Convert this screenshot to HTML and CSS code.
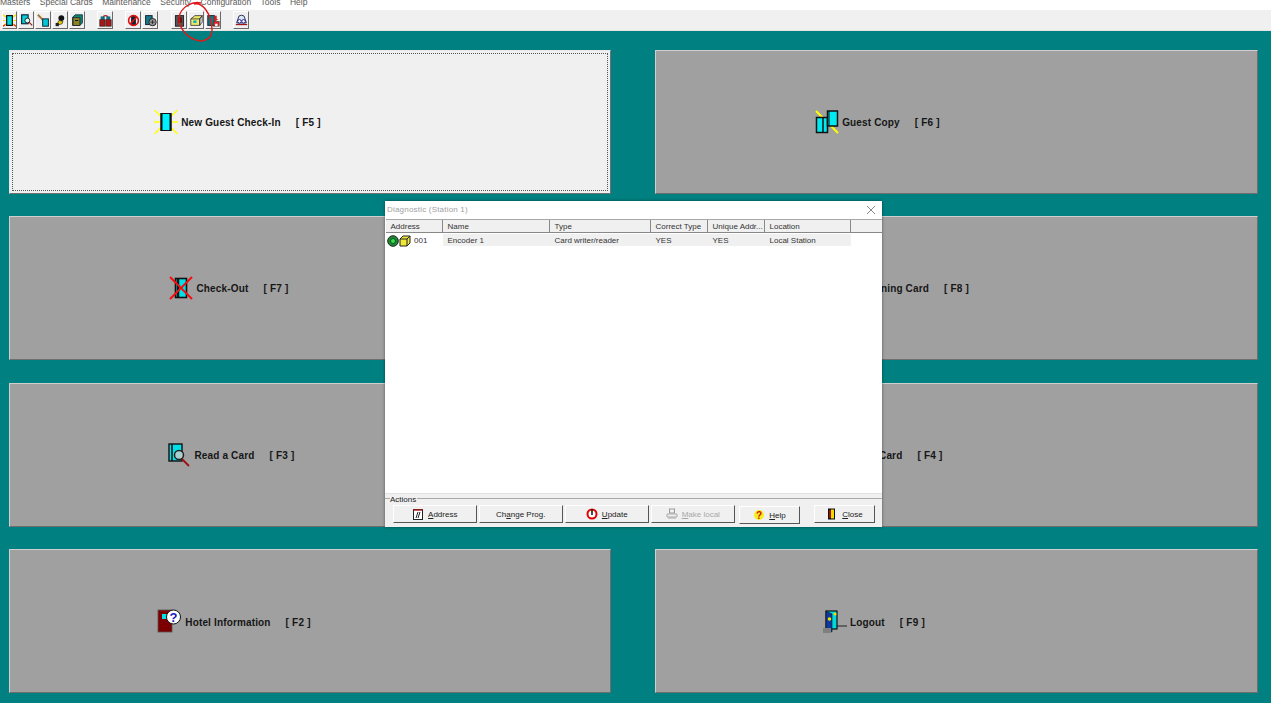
FILE: index.html
```html
<!DOCTYPE html>
<html lang="en">
<head>
<meta charset="utf-8">
<title>Card Encoding System</title>
<link rel="stylesheet" href="styles.css">
</head>
<body>
<header class="top">
  <nav class="menu">
    <span>Masters</span><span>Special Cards</span><span>Maintenance</span><span>Security</span><span>Configuration</span><span>Tools</span><span>Help</span>
  </nav>
  <div class="toolbar">
    <div class="tgroup g1">
      <button class="tb"><svg viewBox="0 0 16 16"><path d="M0 1l4 3M0 15l4-3M16 1l-4 3M16 15l-4-3M0 8h3M13 8h3" stroke="#f2e000" stroke-width="1.500"/><path d="M0 15l3-2M16 15l-3-2" stroke="#e02020" stroke-width="1.500"/><rect x="4.500" y="2" width="7" height="12" fill="#00d8e0" stroke="#111" stroke-width="1.500"/></svg></button>
      <button class="tb"><svg viewBox="0 0 16 16"><rect x="2" y="1" width="8" height="11" fill="#00d0d8" stroke="#123" stroke-width="1.400"/><circle cx="9" cy="8" r="3" fill="#dff" stroke="#222" stroke-width="1.200"/><path d="M11 10l4 4" stroke="#a01818" stroke-width="1.600"/></svg></button>
      <button class="tb"><svg viewBox="0 0 16 16"><path d="M1 1l7 7" stroke="#a87838" stroke-width="2.400"/><rect x="7" y="6" width="7" height="9" fill="#00c8d8" stroke="#123" stroke-width="1.200"/></svg></button>
      <button class="tb"><svg viewBox="0 0 16 16"><circle cx="9" cy="5" r="3.600" fill="#111"/><path d="M6 8l5 1-1 3-7 2z" fill="#e8d000" stroke="#222" stroke-width=".8"/><path d="M2 11h4v4H2z" fill="#222"/></svg></button>
      <button class="tb"><svg viewBox="0 0 16 16"><path d="M2 4l3-3h9v10l-3 3H2z" fill="#0d8a78" stroke="#123" stroke-width="1"/><rect x="2.500" y="4.500" width="8.500" height="9.500" fill="#8c8422" stroke="#222" stroke-width="1"/><path d="M5 8h4" stroke="#111" stroke-width="1.200"/></svg></button>
    </div>
    <div class="tgroup g2">
      <button class="tb"><svg viewBox="0 0 16 16"><path d="M5 5a3 3 0 0 1 6 0" fill="none" stroke="#c01818" stroke-width="1.500"/><rect x="2" y="3" width="5" height="4" fill="#107080"/><rect x="9" y="3" width="5" height="4" fill="#107080"/><rect x="1" y="7" width="6.500" height="8" fill="#a81818" stroke="#222" stroke-width=".8"/><rect x="8.500" y="7" width="6.500" height="8" fill="#a81818" stroke="#222" stroke-width=".8"/></svg></button>
    </div>
    <div class="tgroup g3">
      <button class="tb"><svg viewBox="0 0 16 16"><rect x="5" y="2" width="6" height="12" fill="#123"/><circle cx="8" cy="8" r="6" fill="none" stroke="#e01010" stroke-width="2"/><path d="M4 12L12 4" stroke="#e01010" stroke-width="2"/></svg></button>
      <button class="tb"><svg viewBox="0 0 16 16"><rect x="2" y="2" width="8" height="11" fill="#127a88" stroke="#123" stroke-width="1.200"/><circle cx="10.500" cy="10" r="4.500" fill="#999" stroke="#222" stroke-width="1.200"/><path d="M8 10h5M10.500 7.500v5" stroke="#222"/></svg></button>
    </div>
    <div class="tgroup g4">
      <button class="tb"><svg viewBox="0 0 16 16"><rect x="3" y="2" width="10" height="13" fill="#555" stroke="#222" stroke-width="1.200"/><rect x="6" y="4" width="5" height="7" fill="#6a1414"/></svg></button>
      <button class="tb"><svg viewBox="0 0 16 16"><path d="M1 6l5-4h9l-3 4v8H1z" fill="#f0e868" stroke="#333" stroke-width="1"/><path d="M1 6h11l3-4M12 6v8l3-4V2" fill="none" stroke="#333" stroke-width="1"/><rect x="4" y="8" width="4" height="3" fill="#0ab0b8"/></svg></button>
      <button class="tb"><svg viewBox="0 0 16 16"><rect x="1" y="2" width="8" height="12" fill="#117a80" stroke="#123" stroke-width="1.200"/><path d="M9 2h3v4h2l-3.500 3L7 6h2z" fill="#d82020"/><rect x="8" y="9" width="7" height="6" fill="#e02020" stroke="#444" stroke-width=".8"/><rect x="10" y="12" width="3" height="3" fill="#fff"/></svg></button>
    </div>
    <div class="tgroup g5">
      <button class="tb"><svg viewBox="0 0 16 16"><path d="M4 5a4 3.500 0 0 1 8 0l2 6H2z" fill="#d8e8f8" stroke="#224" stroke-width="1.100"/><circle cx="5.500" cy="9" r="2.200" fill="#fff" stroke="#118" stroke-width="1.100"/><circle cx="10.500" cy="9" r="2.200" fill="#fff" stroke="#118" stroke-width="1.100"/><path d="M1 13h14" stroke="#a01818" stroke-width="1.500"/></svg></button>
    </div>
  </div>
</header>

<main class="grid">
  <button class="big focus"><span class="focus-ring"><svg class="ic" viewBox="0 0 24 24"><path d="M0.500 0l6 6M23.500 0l-6 6M0.500 24l6-6M23.500 24l-6-6M0 12h6M18 12h6" stroke="#ffff00" stroke-width="1.400"/><rect x="7" y="3.500" width="10" height="17" fill="#00f0ff" stroke="#111" stroke-width="1"/><path d="M7.500 3v18M16.500 3v18" stroke="#111" stroke-width="2"/></svg><span class="lbl">New Guest Check-In</span><span class="key">[ F5 ]</span></span></button>
  <button class="big"><span class="inner"><svg class="ic" viewBox="0 0 24 24"><path d="M1 1l22 22" stroke="#ffff00" stroke-width="2"/><rect x="1.500" y="7.500" width="11" height="15" fill="#00e8f0" stroke="#111" stroke-width="1.500"/><path d="M8 7v16" stroke="#111" stroke-width="1.500"/><rect x="12.500" y="1" width="10" height="15" fill="#00e8f0" stroke="#111" stroke-width="1.500"/><path d="M14 1v15" stroke="#111" stroke-width="1"/></svg><span class="lbl">Guest Copy</span><span class="key">[ F6 ]</span></span></button>
  <button class="big"><span class="inner left-4"><svg class="ic" viewBox="0 0 24 24"><rect x="6.500" y="2.500" width="11" height="19" fill="#00e0e8" stroke="#111" stroke-width="1.600"/><path d="M9 2v20" stroke="#111" stroke-width="2.500"/><path d="M1 1l22 22M23 1L1 23" stroke="#f01010" stroke-width="2"/></svg><span class="lbl">Check-Out</span><span class="key">[ F7 ]</span></span></button>
  <button class="big"><span class="inner left-10"><span class="ic"></span><span class="lbl">Emergency Opening Card</span><span class="key">[ F8 ]</span></span></button>
  <button class="big row3"><span class="inner"><svg class="ic" viewBox="0 0 24 24"><rect x="2" y="1" width="13" height="17" fill="#00e0e8" stroke="#111" stroke-width="1.400"/><path d="M5 1v17" stroke="#111" stroke-width="1.600"/><circle cx="12" cy="12" r="4.500" fill="#a8d0d0" stroke="#222" stroke-width="1.500"/><path d="M15 16l7 7" stroke="#a01010" stroke-width="1.800"/></svg><span class="lbl">Read a Card</span><span class="key">[ F3 ]</span></span></button>
  <button class="big row3"><span class="inner"><span class="ic"></span><span class="lbl">Erase a Card</span><span class="key">[ F4 ]</span></span></button>
  <button class="big row4"><span class="inner right-6"><svg class="ic wide" viewBox="0 0 25 24"><rect x="1" y="1" width="14" height="22" fill="#7c0000" stroke="#555" stroke-width=".8"/><rect x="5" y="5" width="5" height="5" fill="#00e0e8"/><circle cx="16.500" cy="8" r="7" fill="#fff" stroke="#111"/><text class="q" x="16.500" y="12.500" text-anchor="middle">?</text></svg><span class="lbl">Hotel Information</span><span class="key">[ F2 ]</span></span></button>
  <button class="big row4"><span class="inner left-7"><svg class="ic" viewBox="0 0 24 24"><path d="M13 17h11" stroke="#222"/><rect x="3" y="2" width="11" height="18" fill="#00d8e0" stroke="#111" stroke-width="1.200"/><path d="M3 2l6 3v18l-6-3z" fill="#0a3a9c" stroke="#111" stroke-width=".6"/><circle cx="12" cy="5" r="1.500" fill="#f0e000"/><circle cx="6.500" cy="10" r="1.800" fill="#f0e000"/><path d="M0 19h8v5H0z" fill="#808080"/></svg><span class="lbl">Logout</span><span class="key">[ F9 ]</span></span></button>
</main>

<section class="dialog">
  <div class="titlebar"><span>Diagnostic (Station 1)</span><svg class="x" viewBox="0 0 10 10"><path d="M1 1l8 8M9 1l-8 8" stroke="#8a8a8a" stroke-width="1"/></svg></div>
  <div class="thead row-grid">
    <span>Address</span><span>Name</span><span>Type</span><span>Correct Type</span><span>Unique Addr...</span><span>Location</span><span></span>
  </div>
  <div class="list">
    <div class="row row-grid">
      <span class="addr"><svg class="si" viewBox="0 0 12 12"><circle cx="6" cy="6" r="5.300" fill="#1c8a30" stroke="#222"/><circle cx="6" cy="6" r="2.500" fill="#40e040" stroke="#053"/></svg><svg class="si" viewBox="0 0 12 12"><path d="M1 4l3-3h7v7l-3 3H1z" fill="#f0e838" stroke="#222"/><path d="M1 4h7v7M8 4l3-3" fill="none" stroke="#222"/></svg><em>001</em></span><span>Encoder 1</span><span>Card writer/reader</span><span>YES</span><span>YES</span><span>Local Station</span>
    </div>
  </div>
  <div class="actions">
    <span class="legend">Actions</span>
    <div class="btns">
      <button class="act w84"><svg class="bi" viewBox="0 0 12 12"><rect x="1.500" y="1.500" width="9" height="10" fill="#fff" stroke="#222"/><path d="M1.500 2h9" stroke="#b02020" stroke-width="1.500"/><path d="M4 10l2-6M6 10l2-6" stroke="#222"/></svg><span><u>A</u>ddress</span></button>
      <button class="act w84"><span>Ch<u>a</u>nge Prog.</span></button>
      <button class="act w84"><svg class="bi" viewBox="0 0 12 12"><circle cx="6" cy="6" r="4.500" fill="#fff" stroke="#e00000" stroke-width="2"/><path d="M6 1v6" stroke="#111" stroke-width="1.500"/></svg><span><u>U</u>pdate</span></button>
      <button class="act w84 off"><svg class="bi" viewBox="0 0 12 12"><rect x="3.500" y="1" width="5" height="4" fill="none" stroke="#999"/><path d="M1 6h10v3H1zM2 10h8" fill="none" stroke="#aaa"/></svg><span><u>M</u>ake local</span></button>
      <button class="act help"><svg class="bi" viewBox="0 0 12 12"><circle cx="6" cy="6" r="5" fill="#f6ee20"/><text class="qb" x="6" y="9.500" text-anchor="middle">?</text></svg><span><u>H</u>elp</span></button>
      <button class="act close"><svg class="bi" viewBox="0 0 12 12"><rect x="2" y="0.500" width="7" height="11" fill="#111"/><rect x="5" y="1.500" width="3" height="9" fill="#f0d800"/><rect x="3" y="2" width="2" height="8" fill="#a01010"/></svg><span><u>C</u>lose</span></button>
    </div>
  </div>
</section>

<svg class="annot" viewBox="0 0 36 41" aria-hidden="true"><path d="M24 2C15 0 4 6 2 16C1 26 10 38 23 40C30 40 35 36 35 29C35 23 33 14 29 9C26 5 22 2 17 3" fill="none" stroke="#e01818" stroke-width="1.400"/></svg>
</body>
</html>
```

FILE: styles.css
```css
* { box-sizing: border-box; }

html, body {
  margin: 0;
  height: 703px;
  overflow: hidden;
}

body {
  background: #008080;
  font-family: "Liberation Sans", Arial, sans-serif;
  display: flex;
  flex-direction: column;
}

button { font-family: inherit; padding: 0; }

.top { flex: none; height: 31px; background: #f0f0f0; }

.menu {
  height: 10px;
  background: #fff;
  display: flex;
  overflow: hidden;
  font-size: 8.5px;
  line-height: 7px;
  color: #5a5a5a;
  gap: 9.5px;
}

.menu span { display: block; margin-top: -1px; }

.toolbar {
  display: flex;
  height: 21px;
  align-items: center;
  padding-left: 2px;
  border-bottom: 1px solid #e4e4e4;
}

.tgroup { display: flex; gap: 1px; }
.g2 { margin-left: 12px; }
.g3 { margin-left: 12px; }
.g4 { margin-left: 13px; }
.g5 { margin-left: 12px; }

.tb {
  width: 16px;
  height: 18px;
  background: #f0f0f0;
  border: 1px solid;
  border-color: #fff #6a6a6a #6a6a6a #fff;
  display: flex;
  align-items: center;
  justify-content: center;
}

.g1 .tb:first-child { width: 15px; }
.tb svg { width: 13px; height: 13px; flex: none; }

.grid {
  flex: 1;
  display: grid;
  grid-template-columns: 602px 603px;
  grid-template-rows: repeat(4, 144px);
  column-gap: 44px;
  row-gap: 22.33px;
  padding: 19px 0 0 9px;
  align-content: start;
}

.big {
  background: #a0a0a0;
  border: 1px solid;
  border-color: #cfcfcf #6e6e6e #6e6e6e #cfcfcf;
  display: flex;
  align-items: stretch;
  color: #161616;
}

.focus { background: #f0f0f0; border-color: #e8e8e8 #707070 #707070 #e8e8e8; padding: 2px; }

.focus-ring, .inner {
  flex: 1;
  display: flex;
  align-items: center;
  justify-content: center;
  padding-right: 158px;
}

.focus-ring { border: 1px dotted #555; padding-right: 145px; }

.inner.left-4 { padding-right: 162px; }
.inner.left-7 { padding-right: 165px; }
.inner.left-10 { padding-right: 168px; }
.inner.right-6 { padding-right: 152px; }

.ic { width: 24px; height: 24px; flex: none; display: block; }
.ic.wide { width: 25px; }

.lbl {
  font-size: 10px;
  font-weight: 700;
  letter-spacing: 0.15px;
  margin-left: 3px;
  white-space: nowrap;
}

.key {
  font-size: 10px;
  font-weight: 700;
  letter-spacing: 0.2px;
  margin-left: 15px;
  white-space: nowrap;
}

.row3 .lbl, .row3 .key { padding-top: 2px; }
.row4 .lbl, .row4 .key { padding-top: 4px; }

.q { font: 700 13px "Liberation Sans", sans-serif; fill: #1818c0; }
.qb { font: 700 10px "Liberation Sans", sans-serif; fill: #d01010; }

.dialog {
  position: absolute;
  left: 385px;
  top: 201px;
  width: 497px;
  height: 326px;
  background: #fff;
  box-shadow: 0 0 3px rgba(0, 0, 0, 0.45);
  display: flex;
  flex-direction: column;
  font-size: 8px;
  color: #333;
}

.titlebar {
  height: 18px;
  flex: none;
  display: flex;
  align-items: center;
  justify-content: space-between;
  padding: 0 6px 1px 2px;
  color: #a0a0a0;
  letter-spacing: 0.2px;
}

.x { width: 10px; height: 10px; }

.row-grid {
  display: grid;
  grid-template-columns: 57px 107px 101px 57px 57px 86px 1fr;
}

.thead {
  flex: none;
  height: 14px;
  background: #f0f0f0;
  border-top: 1px solid #a8a8a8;
  border-bottom: 1px solid #888;
  margin: 0 0 0 1px;
  align-items: center;
}

.thead span {
  height: 12px;
  line-height: 13px;
  padding-left: 4.500px;
  border-right: 1px solid #888;
  white-space: nowrap;
  overflow: hidden;
}

.thead span:last-child { border-right: 0; }

.list { flex: 1; padding-top: 1px; }

.row {
  height: 12px;
  line-height: 13px;
  margin-left: 1px;
  width: 465px;
  background: #f0f0f0;
  grid-template-columns: 57px 107px 101px 57px 57px 86px;
}

.row span { padding-left: 4.500px; white-space: nowrap; }
.row span.addr { padding-left: 1px; display: flex; align-items: center; background: #fff; }
.addr em { font-style: normal; margin-left: 3px; }
.si { width: 12px; height: 12px; display: block; }

.actions {
  flex: none;
  height: 34px;
  background: #f0f0f0;
  border-top: 1px solid #e2e2e2;
  position: relative;
}

.actions::before {
  content: "";
  position: absolute;
  left: 0;
  right: 0;
  top: 4px;
  border-top: 1px solid #a8a8a8;
}

.legend {
  position: absolute;
  left: 5px;
  top: 1px;
  line-height: 9px;
  background: #f0f0f0;
  padding: 0 1px 0 0;
  color: #222;
}

.btns {
  position: absolute;
  left: 8px;
  top: 11px;
  display: flex;
  align-items: flex-start;
  gap: 2.500px;
}

.act {
  height: 18px;
  background: #f0f0f0;
  border: 1px solid;
  border-color: #fff #555 #555 #fff;
  font-size: 8px;
  color: #222;
  display: flex;
  align-items: center;
  justify-content: center;
  gap: 4px;
}

.w84 { width: 83.500px; }
.off { color: #a8a8a8; }
.help { width: 61px; margin: 1px 0 0 2px; }
.close { width: 61px; margin-left: 11.500px; }
.bi { width: 12px; height: 12px; flex: none; }

.annot {
  position: absolute;
  left: 177px;
  top: 1px;
  width: 36px;
  height: 41px;
}
```
